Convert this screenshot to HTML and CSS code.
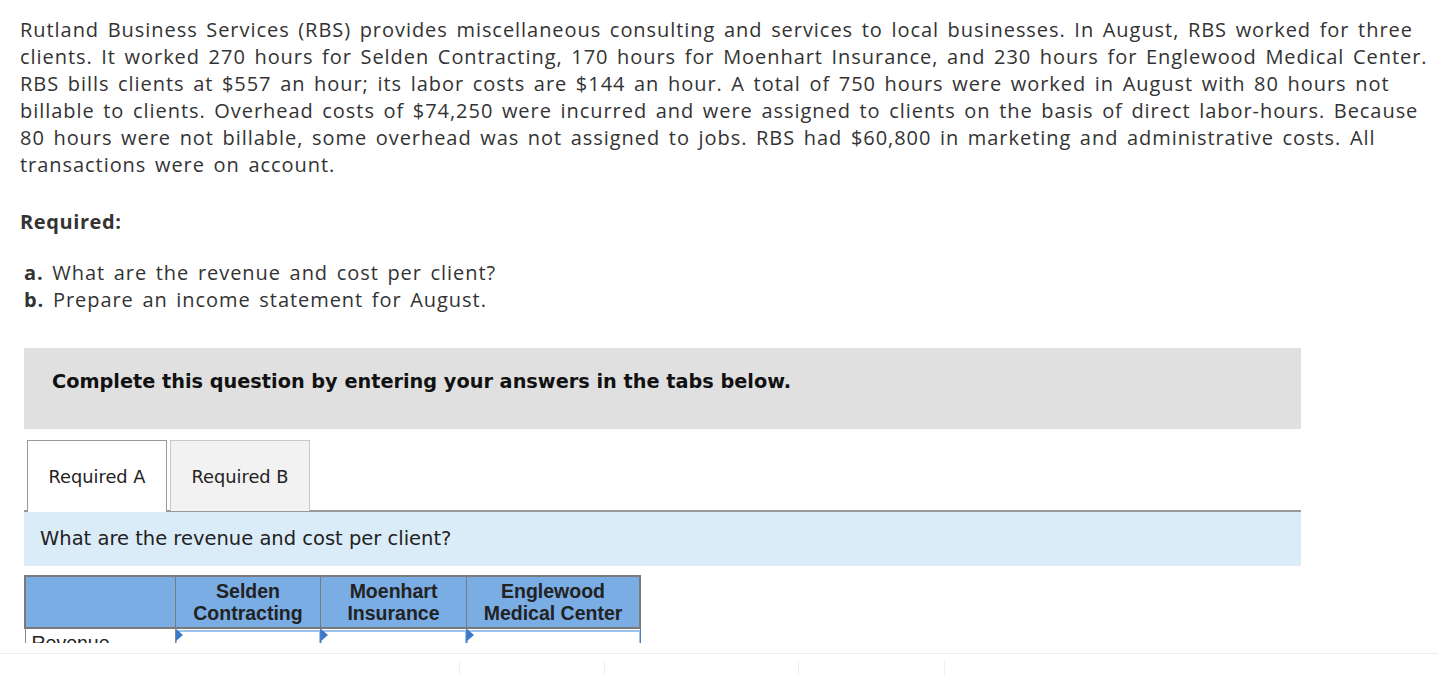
FILE: index.html
```html
<!DOCTYPE html>
<html>
<head>
<meta charset="utf-8">
<link rel="stylesheet" href="styles.css">
</head>
<body>
<div class="page">
  <p class="intro">Rutland Business Services (RBS) provides miscellaneous consulting and services to local businesses. In August, RBS worked for three clients. It worked 270 hours for Selden Contracting, 170 hours for Moenhart Insurance, and 230 hours for Englewood Medical Center. RBS bills clients at $557 an hour; its labor costs are $144 an hour. A total of 750 hours were worked in August with 80 hours not billable to clients. Overhead costs of $74,250 were incurred and were assigned to clients on the basis of direct labor-hours. Because 80 hours were not billable, some overhead was not assigned to jobs. RBS had $60,800 in marketing and administrative costs. All transactions were on account.</p>
  <p class="required">Required:</p>
  <ul class="parts">
    <li><b>a.</b> What are the revenue and cost per client?</li>
    <li><b>b.</b> Prepare an income statement for August.</li>
  </ul>
  <div class="widget">
    <div class="instruct">Complete this question by entering your answers in the tabs below.</div>
    <div class="tabs">
      <div class="tab active">Required A</div>
      <div class="tab">Required B</div>
    </div>
    <div class="prompt">What are the revenue and cost per client?</div>
    <table class="grid">
      <thead>
        <tr>
          <th class="c0"></th>
          <th class="c1">Selden<br>Contracting</th>
          <th class="c2">Moenhart<br>Insurance</th>
          <th class="c3">Englewood<br>Medical Center</th>
        </tr>
      </thead>
      <tbody>
        <tr>
          <td class="label">Revenue</td>
          <td class="in"><span class="box"></span></td>
          <td class="in"><span class="box"></span></td>
          <td class="in"><span class="box"></span></td>
        </tr>
        <tr>
          <td class="label">Cost</td>
          <td class="in"><span class="box"></span></td>
          <td class="in"><span class="box"></span></td>
          <td class="in"><span class="box"></span></td>
        </tr>
      </tbody>
    </table>
  </div>
</div>
<div class="footer">
  <div class="footer-bar">
    <div class="fitem f1"></div>
    <div class="fitem f2"></div>
    <div class="fitem f3"></div>
    <div class="fitem f4"></div>
    <div class="fitem f5"></div>
  </div>
</div>
</body>
</html>
```

FILE: styles.css
```css
html, body {
  margin: 0;
  padding: 0;
  background: #fff;
  overflow: hidden;
}
.page {
  padding: 16px 20px 0 20px;
  height: 627px;
  overflow: hidden;
  font-family: "Open Sans", "Liberation Sans", sans-serif;
  color: #333;
}
.intro {
  margin: 0;
  font-size: 20px;
  letter-spacing: 0.95px;
  word-spacing: 2.5px;
  line-height: 27px;
  width: 1408px;
}
.required {
  margin: 30px 0 0 0;
  font-size: 20px;
  letter-spacing: 0.6px;
  line-height: 27px;
  font-weight: 700;
}
.parts {
  list-style: none;
  margin: 24px 0 0 4px;
  padding: 0;
  font-size: 20px;
  letter-spacing: 0.95px;
  word-spacing: 2.5px;
  line-height: 27px;
}
.parts b { font-weight: 700; }
.widget {
  margin: 35px 0 0 4px;
  width: 1277px;
  font-family: "DejaVu Sans", Verdana, sans-serif;
  color: #111;
}
.instruct {
  background: #e0e0e0;
  height: 81px;
  box-sizing: border-box;
  padding: 21px 0 0 28px;
  font-size: 19.3px;
  font-weight: 700;
  line-height: 26px;
}
.tabs {
  margin-top: 11px;
  display: flex;
  gap: 3px;
  padding-left: 3px;
  border-bottom: 2px solid #999;
  height: 70px;
}
.tab {
  box-sizing: border-box;
  height: 71px;
  width: 140px;
  border: 1px solid #c8c8c8;
  border-bottom: none;
  background: #f2f2f2;
  display: flex;
  align-items: center;
  justify-content: center;
  font-size: 17.8px;
  color: #222;
}
.tab.active {
  background: #fff;
  border-color: #999;
  height: 72px;
  position: relative;
  z-index: 1;
}
.prompt {
  background: #dbecf9;
  height: 54px;
  box-sizing: border-box;
  padding: 14px 0 0 16px;
  font-size: 19.5px;
  line-height: 26px;
  color: #222;
}
.grid {
  margin-top: 9px;
  border-collapse: collapse;
  font-family: "Liberation Sans", Arial, sans-serif;
}
.grid th {
  background: #7aade4;
  border: 2px solid #7a7a7a;
  border-left-width: 1px;
  border-right-width: 1px;
  height: 50px;
  padding: 0;
  font-size: 19.5px;
  line-height: 22px;
  font-weight: 700;
  color: #222;
  vertical-align: middle;
}
.grid th.c0 { width: 149px; border-left-width: 2px; }
.grid th.c1 { width: 144px; }
.grid th.c2 { width: 145px; }
.grid th.c3 { width: 172px; border-right-width: 2px; }
.grid td {
  padding: 0;
  height: 40px;
  border: 1px solid #8a8a8a;
  border-top: none;
}
.grid td.label {
  font-size: 19.5px;
  line-height: 22px;
  padding-left: 6px;
  color: #222;
  vertical-align: top;
  padding-top: 3px;
}
.grid td.in {
  position: relative;
  border-left: 1px solid #4a7fc0;
  border-right: 1px solid #4a7fc0;
}
.grid td.in .box {
  display: block;
  height: 39px;
  border-top: 2px solid #9cc3ec;
  border-left: 1px solid #9cc3ec;
  border-right: 1px solid #9cc3ec;
}
.grid td.in::before {
  content: "";
  position: absolute;
  left: 0;
  top: 0;
  width: 0;
  height: 0;
  border-top: 6px solid transparent;
  border-bottom: 6px solid transparent;
  border-left: 7px solid #3a78c8;
}
.footer {
  position: fixed;
  left: 0;
  right: 0;
  top: 643px;
  height: 32px;
  background: #fff;
  padding-top: 10px;
  box-sizing: border-box;
}
.footer-bar {
  border-top: 1px solid #ececec;
  height: 21px;
  display: flex;
  padding-top: 7px;
  box-sizing: border-box;
}
.fitem { height: 14px; }
.f1 { width: 459px; }
.f2 { width: 144px; border-left: 1px solid #efefef; }
.f3 { width: 193px; border-left: 1px solid #efefef; }
.f4 { width: 145px; border-left: 1px solid #efefef; }
.f5 { flex: 1; border-left: 1px solid #efefef; }
```
